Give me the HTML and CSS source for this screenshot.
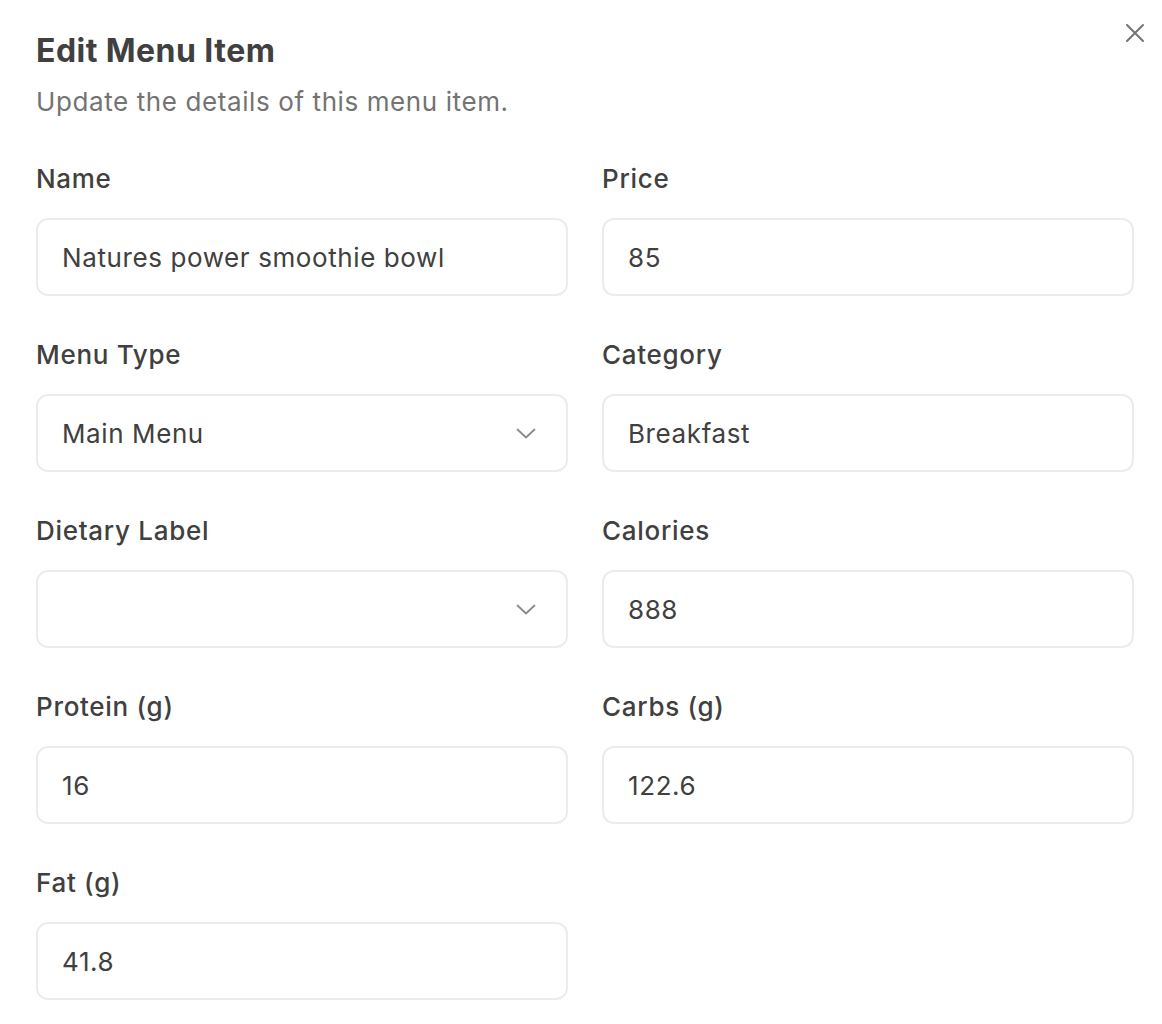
FILE: index.html
```html
<!DOCTYPE html>
<html lang="en">
<head>
<meta charset="utf-8">
<title>Edit Menu Item</title>
<link rel="stylesheet" href="styles.css">
</head>
<body>
<div class="dialog">
  <button class="close" aria-label="Close">
    <svg width="20" height="20" viewBox="0 0 20 20"><path d="M2 2 L18 18 M18 2 L2 18" stroke="#737373" stroke-width="2" stroke-linecap="round" fill="none"/></svg>
  </button>
  <header class="head">
    <h1 class="title">Edit Menu Item</h1>
    <p class="desc">Update the details of this menu item.</p>
  </header>
  <div class="grid">
    <div class="field">
      <label class="label">Name</label>
      <div class="input">Natures power smoothie bowl</div>
    </div>
    <div class="field">
      <label class="label">Price</label>
      <div class="input">85</div>
    </div>
    <div class="field">
      <label class="label">Menu Type</label>
      <div class="input select"><span>Main Menu</span>
        <svg class="chev" width="20" height="11" viewBox="0 0 20 11"><polyline points="1.5,1.5 10,9.5 18.5,1.5" fill="none" stroke="#8a8a8a" stroke-width="1.8" stroke-linecap="round" stroke-linejoin="round"/></svg>
      </div>
    </div>
    <div class="field">
      <label class="label">Category</label>
      <div class="input">Breakfast</div>
    </div>
    <div class="field">
      <label class="label">Dietary Label</label>
      <div class="input select"><span></span>
        <svg class="chev" width="20" height="11" viewBox="0 0 20 11"><polyline points="1.5,1.5 10,9.5 18.5,1.5" fill="none" stroke="#8a8a8a" stroke-width="1.8" stroke-linecap="round" stroke-linejoin="round"/></svg>
      </div>
    </div>
    <div class="field">
      <label class="label">Calories</label>
      <div class="input">888</div>
    </div>
    <div class="field">
      <label class="label">Protein (g)</label>
      <div class="input">16</div>
    </div>
    <div class="field">
      <label class="label">Carbs (g)</label>
      <div class="input">122.6</div>
    </div>
    <div class="field">
      <label class="label">Fat (g)</label>
      <div class="input">41.8</div>
    </div>
  </div>
</div>
</body>
</html>
```
FILE: styles.css
```css
* { box-sizing: border-box; }
html, body { margin: 0; padding: 0; background: #ffffff; }
body {
  font-family: Inter, "Noto Sans", "Liberation Sans", sans-serif;
  color: #404040;
}
.dialog {
  position: relative;
  padding: 31px 28px 0 36px;
}
.close {
  position: absolute;
  top: 23px;
  right: 17px;
  width: 20px;
  height: 20px;
  padding: 0;
  border: 0;
  background: none;
  display: flex;
}
.head { margin-bottom: 45px; }
.title {
  margin: 0;
  font-size: 32px;
  line-height: 40px;
  font-weight: 700;
  letter-spacing: 0.45px;
  color: #404040;
}
.desc {
  margin: 15px 0 0;
  font-size: 26px;
  line-height: 32px;
  letter-spacing: 0.6px;
  color: #737373;
}
.grid {
  display: grid;
  grid-template-columns: 1fr 1fr;
  column-gap: 34px;
  row-gap: 43px;
}
.field { display: flex; flex-direction: column; gap: 23px; }
.label {
  font-size: 26px;
  line-height: 32px;
  font-weight: 500;
  letter-spacing: 0.7px;
  color: #404040;
}
.input {
  height: 78px;
  border: 2px solid #ececec;
  border-radius: 12px;
  padding: 0 30px 0 24px;
  display: flex;
  align-items: center;
  justify-content: space-between;
  font-size: 26px;
  letter-spacing: 0.6px;
  color: #404040;
}
.chev { flex: none; }
```
